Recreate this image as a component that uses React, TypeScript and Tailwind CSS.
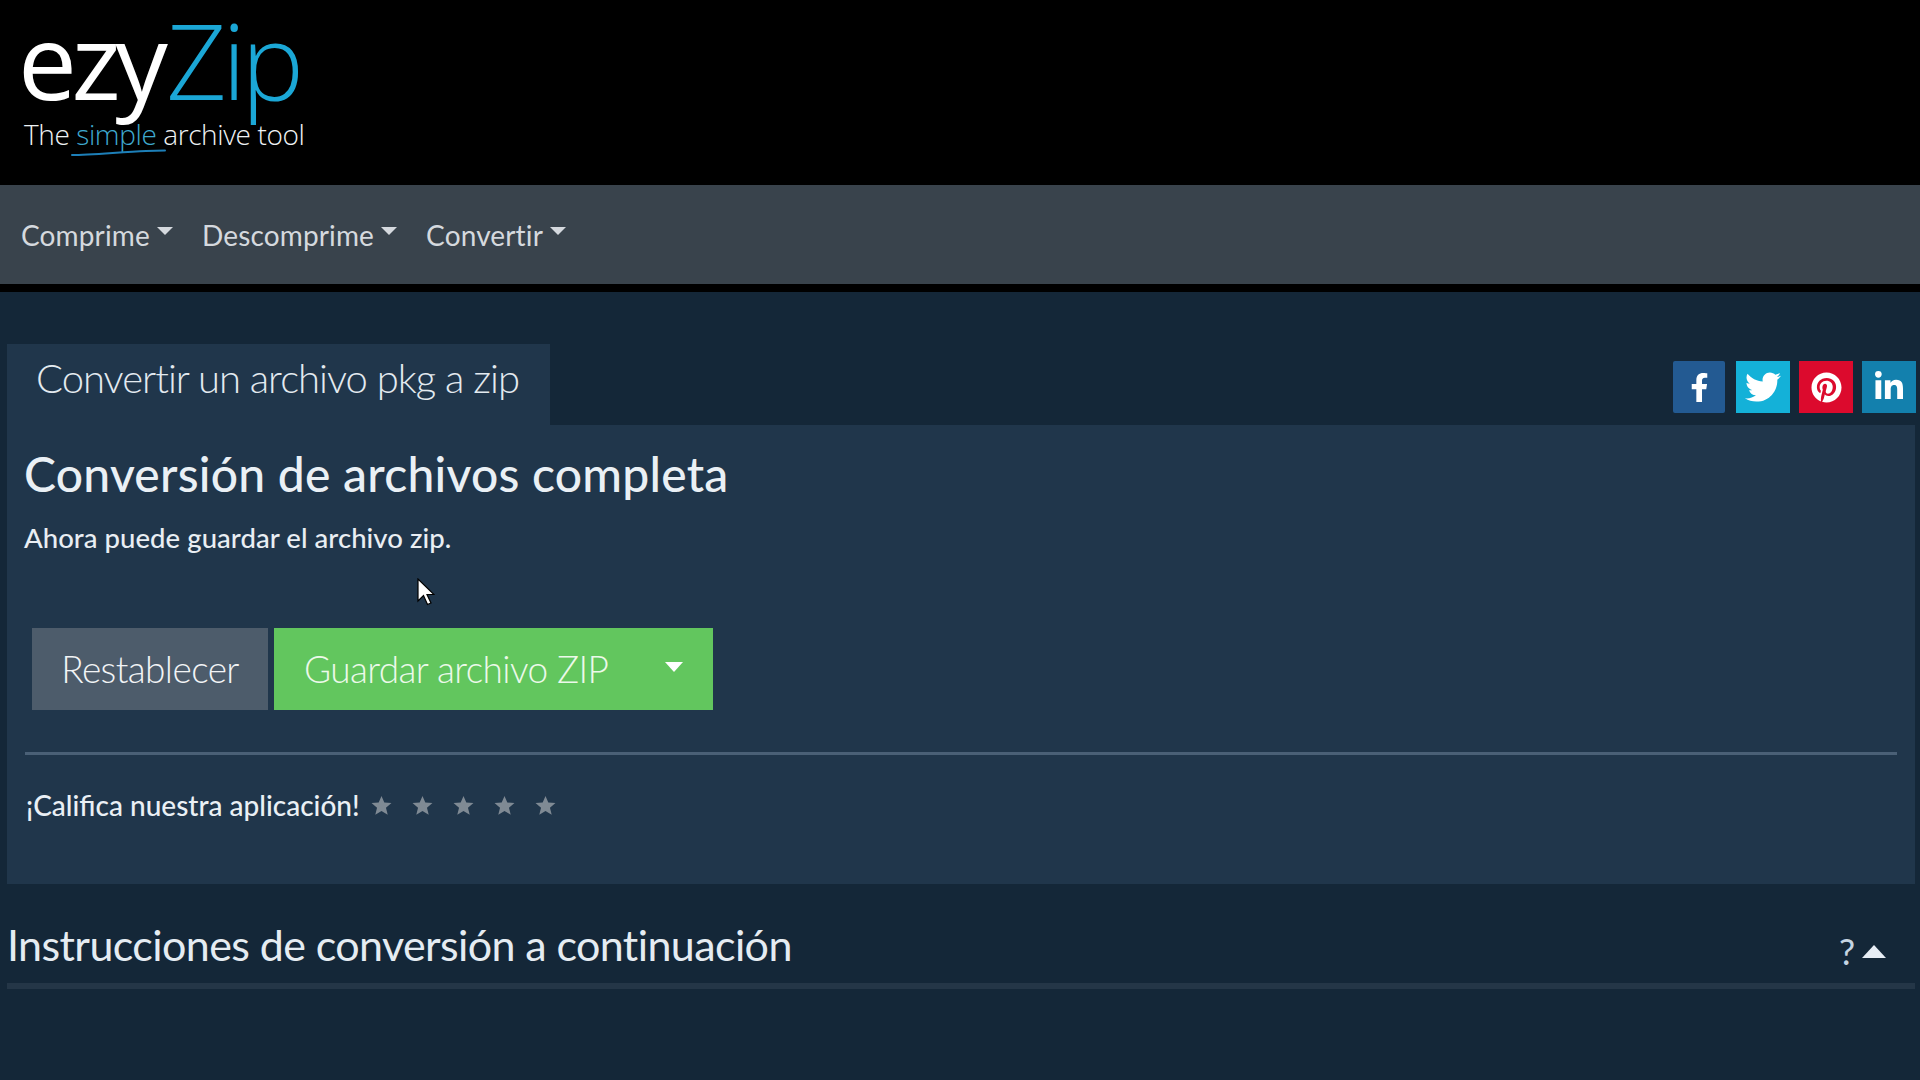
import { FaFacebookF, FaTwitter, FaPinterest, FaLinkedinIn } from 'react-icons/fa'

const NAV_ITEMS = ['Comprime', 'Descomprime', 'Convertir']

const SOCIALS = [
  { name: 'facebook', Icon: FaFacebookF, className: 'bg-[#235a92] w-[52px] rounded-[2px]', size: 29 },
  { name: 'twitter', Icon: FaTwitter, className: 'bg-[#14b1d8] w-[54px] ml-[11px]', size: 36 },
  { name: 'pinterest', Icon: FaPinterest, className: 'bg-[#dc0a2d] w-[54px] ml-[9px]', size: 31 },
  { name: 'linkedin', Icon: FaLinkedinIn, className: 'bg-[#1380ad] w-[54px] ml-[9px]', size: 32 },
]

const Caret = ({ className }: { className: string }) => <span className={`inline-block w-0 h-0 border-x-transparent ${className}`} />

export default function App() {
  return (
    <div className="relative min-h-[1080px] bg-[#142738] font-['Lato',sans-serif] text-[#e9eef3] overflow-hidden">
      {/* Logo */}
      <header className="h-[185px] bg-black pl-[18px] pt-[2px]">
        <div className="relative w-[300px] font-['Open_Sans',sans-serif] font-light">
          <div className="text-[105px] leading-[116px] tracking-[-4.5px] text-white">
            <span className="font-normal tracking-[-5.5px]">ezy</span>
            <span className="text-[#1ba7d6] ml-[4px]">Zip</span>
          </div>
          <div className="text-[28px] leading-[32px] ml-[6px] tracking-[-0.4px] text-[#eef2f4] whitespace-nowrap">
            The <span className="text-[#3fa9cf]">simple</span> archive tool
          </div>
          <svg className="absolute left-[53px] top-[145px]" width="96" height="12" viewBox="0 0 96 12" fill="none">
            <path d="M1 8 C 20 8, 50 5, 75 4 L 94 3.5" stroke="#1d7fb8" strokeWidth="2" strokeLinecap="round" />
          </svg>
        </div>
      </header>

      {/* Nav */}
      <nav className="h-[99px] bg-[#39434c] flex items-center pl-[21px] gap-[29px] text-[28px] tracking-[0.15px] text-[#d5d9de]">
        {NAV_ITEMS.map((item) => (
          <span key={item} className="flex items-center gap-[7px]">
            {item}
            <Caret className="border-x-[8px] border-t-[8px] border-t-[#d5d9de] mb-[8px]" />
          </span>
        ))}
      </nav>
      <div className="h-[8px] bg-black" />

      <main className="pt-[52px]">
        <div className="flex justify-between pl-[7px] pr-[4px]">
          <div className="h-[81px] w-[543px] bg-[#20364b] pl-[29px] pt-[9px] text-[40px] leading-[50px] tracking-[-1px] font-light text-[#e3eaf0] whitespace-nowrap">
            Convertir un archivo pkg a zip
          </div>
          <div className="flex h-[52px] mt-[17px]">
            {SOCIALS.map(({ name, Icon, className, size }) => (
              <a key={name} className={`flex items-center justify-center text-white ${className}`}>
                <Icon size={size} />
              </a>
            ))}
          </div>
        </div>

        {/* Result panel */}
        <section className="ml-[7px] mr-[5px] h-[459px] bg-[#20364b] px-[18px] pt-[21px]">
          <h2 className="-ml-px text-[48px] leading-[56px] tracking-[0.25px] font-medium text-[#eaf0f5] whitespace-nowrap">
            Conversión de archivos completa
          </h2>
          <p className="-ml-px mt-[20px] text-[27.5px] leading-[32px] tracking-[0.05px] font-medium text-[#e9eef3]">Ahora puede guardar el archivo zip.</p>
          <div className="flex mt-[74px] ml-[7px] gap-[6px]">
            <button className="w-[236px] h-[82px] bg-[#4d5c6b] text-[37px] tracking-[-0.6px] font-light text-[#f2f4f6]">Restablecer</button>
            <button className="w-[439px] h-[82px] bg-[#62c65e] text-[37px] tracking-[-0.6px] font-light text-[#ecf9ea] flex items-center px-[30px] justify-between">
              Guardar archivo ZIP
              <Caret className="border-x-[9px] border-t-[10px] border-t-white mb-[4px]" />
            </button>
          </div>
          <hr className="mt-[42px] border-0 h-[3px] bg-[#4a6076]" />
          <div className="flex items-center mt-[32px] h-[36px]">
            <span className="text-[28px] font-medium text-[#eaf0f5] ml-px whitespace-nowrap">¡Califica nuestra aplicación!</span>
            <div className="flex ml-[11px] gap-[20px] text-[#7f8a94]">
              {[0, 1, 2, 3, 4].map((i) => (
                <svg key={i} width="21" height="21" viewBox="0 0 24 24" fill="currentColor">
                  <path d="M12 1l3.2 7.6 8.2.6-6.3 5.3 2 8-7.1-4.3-7.1 4.3 2-8L.6 9.2l8.2-.6z" />
                </svg>
              ))}
            </div>
          </div>
        </section>

        {/* Instructions */}
        <div className="mt-[35px] pl-[7px] pr-[34px] flex items-center justify-between">
          <h3 className="text-[43px] leading-[52px] tracking-[-0.6px] text-[#e5ecf2] whitespace-nowrap">Instrucciones de conversión a continuación</h3>
          <div className="flex items-center gap-[7px] mt-[12px]">
            <span className="text-[36px] leading-[40px] text-[#c5d4e2]">?</span>
            <span className="w-0 h-0 border-x-[12px] border-x-transparent border-b-[13px] border-b-[#e7edf4]" />
          </div>
        </div>
        <div className="mt-[12px] ml-[7px] mr-[5px] h-[6px] bg-[#243647]" />
      </main>

      {/* Mouse cursor */}
      <svg className="absolute left-[417px] top-[578px]" width="18" height="28" viewBox="0 0 18 28">
        <path d="M1 1v22l5.5-5.5 4 9 3.5-1.5-4-8.5H17z" fill="#fff" stroke="#000" strokeWidth="1.2" />
      </svg>
    </div>
  )
}
